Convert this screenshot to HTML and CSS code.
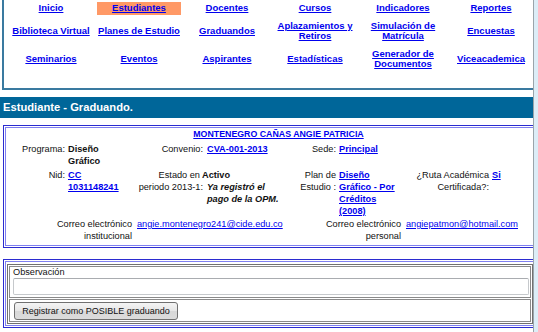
FILE: index.html
```html
<!DOCTYPE html>
<html lang="es">
<head>
<meta charset="utf-8">
<title>Estudiante - Graduando</title>
<link rel="stylesheet" href="styles.css">
</head>
<body>
<div class="page">
  <div class="nav">
    <div class="nav-grid">
      <div class="nav-cell"><a href="#">Inicio</a></div>
      <div class="nav-cell active"><a href="#">Estudiantes</a></div>
      <div class="nav-cell"><a href="#">Docentes</a></div>
      <div class="nav-cell"><a href="#">Cursos</a></div>
      <div class="nav-cell"><a href="#">Indicadores</a></div>
      <div class="nav-cell"><a href="#">Reportes</a></div>
      <div class="nav-cell"><a href="#">Biblioteca Virtual</a></div>
      <div class="nav-cell"><a href="#">Planes de Estudio</a></div>
      <div class="nav-cell"><a href="#">Graduandos</a></div>
      <div class="nav-cell"><a href="#">Aplazamientos y<br>Retiros</a></div>
      <div class="nav-cell"><a href="#">Simulación de<br>Matrícula</a></div>
      <div class="nav-cell"><a href="#">Encuestas</a></div>
      <div class="nav-cell"><a href="#">Seminarios</a></div>
      <div class="nav-cell"><a href="#">Eventos</a></div>
      <div class="nav-cell"><a href="#">Aspirantes</a></div>
      <div class="nav-cell"><a href="#">Estadísticas</a></div>
      <div class="nav-cell"><a href="#">Generador de<br>Documentos</a></div>
      <div class="nav-cell"><a href="#">Viceacademica</a></div>
    </div>
  </div>

  <div class="bar">Estudiante - Graduando.</div>

  <div class="box info">
    <div class="box-inner info-inner">
      <div class="name-row"><a href="#" class="name">MONTENEGRO CAÑAS ANGIE PATRICIA</a></div>
      <div class="grid8">
        <div class="lbl">Programa:</div>
        <div class="val"><b>Diseño<br>Gráfico</b></div>
        <div class="lbl">Convenio:</div>
        <div class="val v4"><a href="#" class="bl">CVA-001-2013</a></div>
        <div class="lbl">Sede:</div>
        <div class="val"><a href="#" class="bl">Principal</a></div>
        <div class="lbl"></div>
        <div class="val"></div>
      </div>
      <div class="grid8 row3">
        <div class="lbl">Nid:</div>
        <div class="val"><a href="#" class="bl">CC<br>1031148241</a></div>
        <div class="lbl"><span class="pad-end">Estado en</span><br>periodo 2013-1:</div>
        <div class="val v4"><b class="estado">Activo</b><br><b><i>Ya registró el<br>pago de la OPM.</i></b></div>
        <div class="lbl">Plan de<br>Estudio :</div>
        <div class="val"><a href="#" class="bl">Diseño<br>Gráfico - Por<br>Créditos<br>(2008)</a></div>
        <div class="lbl">¿Ruta Académica<br>Certificada?:</div>
        <div class="val"><a href="#" class="bl">Si</a></div>
      </div>
      <div class="grid4">
        <div class="lbl">Correo electrónico<br>institucional</div>
        <div class="val"><a href="#">angie.montenegro241@cide.edu.co</a></div>
        <div class="lbl">Correo electrónico<br>personal</div>
        <div class="val"><a href="#">angiepatmon@hotmail.com</a></div>
      </div>
    </div>
  </div>

  <div class="box obs">
    <div class="box-inner obs-inner">
      <div class="obs-table">
        <div class="obs-cell cell-text">
          <div class="obs-label">Observación</div>
          <div class="obs-input"></div>
        </div>
        <div class="obs-cell cell-btn">
          <button class="btn" type="button">Registrar como POSIBLE graduando</button>
        </div>
      </div>
    </div>
  </div>
</div>
</body>
</html>
```

FILE: styles.css
```css
html, body {
  margin: 0;
  padding: 0;
}
body {
  background: #dcedf7;
  font-family: "Liberation Sans", Arial, sans-serif;
  font-size: 9.2px;
  color: #111;
}
a {
  color: #0000ee;
  text-decoration: underline;
}
.page {
  width: 533px;
  height: 332px;
  overflow: hidden;
  background: #fff;
  border-right: 1px solid #9aa4aa;
}

/* nav */
.nav {
  margin-left: 2px;
  border-left: 2px solid #3a7aa0;
  border-bottom: 2px solid #3a7aa0;
  padding: 2px 0 17px 5px;
}
.nav-grid {
  display: grid;
  grid-template-columns: repeat(6, 84px);
  grid-template-rows: 13px 24px 24px;
  column-gap: 4px;
  row-gap: 4px;
}
.nav-cell {
  display: flex;
  align-items: center;
  justify-content: center;
  text-align: center;
  font-size: 9.5px;
  line-height: 10.5px;
  font-weight: bold;
}
.nav-cell.active {
  background: #ff9966;
}

/* header bar */
.bar {
  margin-top: 7px;
  height: 21px;
  line-height: 21px;
  background: #006699;
  color: #fff;
  font-weight: bold;
  font-size: 11.2px;
  padding-left: 3px;
}

/* boxes */
.box {
  margin-left: 3px;
  width: 532px;
  border: 1px solid #2b2bd0;
  padding: 1px;
}
.box-inner {
  border: 1px solid #7f7ff0;
}
.info {
  margin-top: 7px;
}
.info-inner {
  padding: 0 0 3px 0;
  line-height: 12px;
}
.name-row {
  padding-left: 20px;
  width: 505px;
  text-align: center;
  height: 12px;
}
.name {
  font-weight: bold;
  font-size: 8.8px;
}
.bl {
  font-weight: bold;
}
.grid8 {
  display: grid;
  grid-template-columns: 61px 58px 80px 80px 53px 63px 90px 40px;
  margin-top: 3px;
}
.grid8.row3 {
  margin-top: 2px;
}
.grid4 {
  display: grid;
  grid-template-columns: 128px 134px 135px 128px;
  margin-top: 1px;
}
.lbl {
  text-align: right;
  padding-right: 2px;
}
.pad-end {
  padding-right: 3px;
}
.val {
  padding-left: 1px;
}
.val.v4 {
  padding-left: 2px;
}
.estado {
  margin-left: -5px;
}
.grid4 .val {
  padding-left: 3px;
}

/* observation */
.obs {
  margin-top: 11px;
}
.obs-inner {
  padding: 2px 0 1px 1px;
}
.obs-table {
  width: 522px;
  border: 1px solid #707070;
  padding: 1px;
  display: flex;
  flex-direction: column;
  gap: 1px;
}
.obs-cell {
  border: 1px solid #8a8a8a;
}
.cell-text {
  padding: 0 1px 2px 3px;
}
.obs-label {
  height: 11px;
  line-height: 11px;
  color: #111;
}
.obs-input {
  height: 15px;
  border: 1px solid #c6c9cc;
  border-top-color: #a9acb0;
  border-radius: 2px;
  background: #fff;
}
.cell-btn {
  padding: 2px 0 1px 4px;
}
.btn {
  display: block;
  width: 164px;
  height: 18px;
  margin: 0;
  padding: 0;
  font-family: "Liberation Sans", Arial, sans-serif;
  font-size: 9px;
  color: #111;
  border: 1px solid #707070;
  border-radius: 3px;
  background: linear-gradient(#f4f4f4, #e6e6e6 50%, #d8d8d8 51%, #dcdcdc);
}
```
